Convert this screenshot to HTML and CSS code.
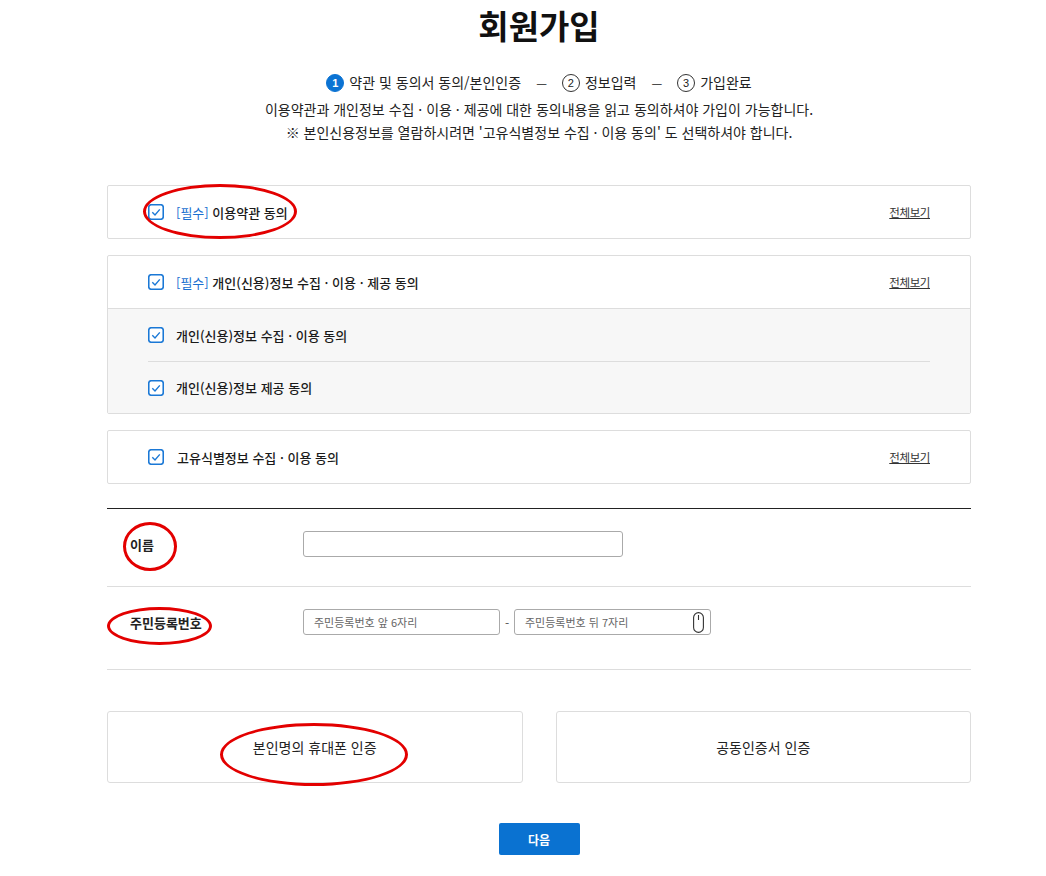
FILE: index.html
```html
<!DOCTYPE html>
<html lang="ko">
<head>
  <meta charset="utf-8">
  <meta name="viewport" content="width=device-width">
  <title>회원가입</title>
  <link rel="stylesheet" href="styles.css">
</head>
<body>

  <div class="wrap">

    <h1 class="title">회원가입</h1>

    <div class="steps">
      <span class="step on"><i>1</i>약관 및 동의서 동의/본인인증</span>
      <span class="dash">—</span>
      <span class="step"><i>2</i>정보입력</span>
      <span class="dash">—</span>
      <span class="step"><i>3</i>가입완료</span>
    </div>
    <p class="desc first">이용약관과 개인정보 수집 · 이용 · 제공에 대한 동의내용을 읽고 동의하셔야 가입이 가능합니다.</p>
    <p class="desc">※ 본인신용정보를 열람하시려면 '고유식별정보 수집 · 이용 동의' 도 선택하셔야 합니다.</p>

    <div class="agree top">
      <div class="agree-row">
        <label class="chk-label">
          <span class="chk"><svg width="16" height="16" viewBox="0 0 16 16"><rect x="0.75" y="0.75" width="14.5" height="14.5" rx="2.5" fill="#fff" stroke="#1a78d6" stroke-width="1.6"/><path d="M4.3 8.3 L7 11 L11.8 5.4" fill="none" stroke="#1a78d6" stroke-width="1.4"/></svg></span>
          <span class="txt"><span class="req">[필수]</span> 이용약관 동의</span>
        </label>
        <a class="more" href="#">전체보기</a>
      </div>
    </div>

    <div class="agree">
      <div class="agree-row">
        <label class="chk-label">
          <span class="chk"><svg width="16" height="16" viewBox="0 0 16 16"><rect x="0.75" y="0.75" width="14.5" height="14.5" rx="2.5" fill="#fff" stroke="#1a78d6" stroke-width="1.6"/><path d="M4.3 8.3 L7 11 L11.8 5.4" fill="none" stroke="#1a78d6" stroke-width="1.4"/></svg></span>
          <span class="txt"><span class="req">[필수]</span> 개인(신용)정보 수집 · 이용 · 제공 동의</span>
        </label>
        <a class="more" href="#">전체보기</a>
      </div>
      <div class="agree-sub">
        <div class="sub-row">
          <label class="chk-label">
            <span class="chk"><svg width="16" height="16" viewBox="0 0 16 16"><rect x="0.75" y="0.75" width="14.5" height="14.5" rx="2.5" fill="#fff" stroke="#1a78d6" stroke-width="1.6"/><path d="M4.3 8.3 L7 11 L11.8 5.4" fill="none" stroke="#1a78d6" stroke-width="1.4"/></svg></span>
            <span class="txt">개인(신용)정보 수집 · 이용 동의</span>
          </label>
        </div>
        <div class="sub-row">
          <label class="chk-label">
            <span class="chk"><svg width="16" height="16" viewBox="0 0 16 16"><rect x="0.75" y="0.75" width="14.5" height="14.5" rx="2.5" fill="#fff" stroke="#1a78d6" stroke-width="1.6"/><path d="M4.3 8.3 L7 11 L11.8 5.4" fill="none" stroke="#1a78d6" stroke-width="1.4"/></svg></span>
            <span class="txt">개인(신용)정보 제공 동의</span>
          </label>
        </div>
      </div>
    </div>

    <div class="agree">
      <div class="agree-row">
        <label class="chk-label">
          <span class="chk"><svg width="16" height="16" viewBox="0 0 16 16"><rect x="0.75" y="0.75" width="14.5" height="14.5" rx="2.5" fill="#fff" stroke="#1a78d6" stroke-width="1.6"/><path d="M4.3 8.3 L7 11 L11.8 5.4" fill="none" stroke="#1a78d6" stroke-width="1.4"/></svg></span>
          <span class="txt pad">고유식별정보 수집 · 이용 동의</span>
        </label>
        <a class="more" href="#">전체보기</a>
      </div>
    </div>

    <div class="form">
      <div class="form-row">
        <div class="form-label">이름</div>
        <input class="inp inp-name" type="text">
      </div>
      <div class="form-row last">
        <div class="form-label">주민등록번호</div>
        <input class="inp inp-rrn" type="text" placeholder="주민등록번호 앞 6자리">
        <span class="hyphen">-</span>
        <div class="inp inp-rrn inp-secure">
          <span class="ph">주민등록번호 뒤 7자리</span>
          <svg width="11" height="21" viewBox="0 0 11 21"><rect x="0.6" y="0.6" width="9.8" height="19.8" rx="4.9" fill="none" stroke="#333" stroke-width="1.1"/><path d="M5.5 3 V8" stroke="#333" stroke-width="1.1"/></svg>
        </div>
      </div>
    </div>

    <div class="auth">
      <button class="auth-btn">본인명의 휴대폰 인증</button>
      <button class="auth-btn">공동인증서 인증</button>
    </div>

    <div class="next">
      <button class="next-btn">다음</button>
    </div>

    <!-- red annotation marks -->
    <span class="mark m1"></span>
    <span class="mark m2"></span>
    <span class="mark m3"></span>
    <span class="mark m4"></span>
  </div>

</body>
</html>
```

FILE: styles.css
```css
html, body {
  margin: 0;
  padding: 0;
  background: #fff;
  color: #222;
  font-family: "Noto Sans CJK KR", "Noto Sans", sans-serif;
}

.wrap {
  position: relative;
  width: 864px;
  margin-left: 107px;
  padding-bottom: 21px;
}

.title {
  margin: 0;
  padding-top: 8px;
  font-size: 33px;
  line-height: 34px;
  font-weight: 700;
  color: #111;
  text-align: center;
}

.steps {
  margin-top: 29px;
  display: flex;
  justify-content: center;
  align-items: center;
  font-size: 14px;
  line-height: 23px;
  color: #222;
}

.step {
  display: flex;
  align-items: center;
}

.step i {
  font-style: normal;
  box-sizing: border-box;
  width: 18px;
  height: 18px;
  border: 1px solid #333;
  border-radius: 50%;
  margin-right: 5px;
  font-size: 11px;
  line-height: 16px;
  text-align: center;
  font-family: "Liberation Sans", Arial, sans-serif;
}

.step.on i {
  background: #0b73d3;
  border-color: #0b73d3;
  color: #fff;
  font-weight: 700;
}

.dash {
  margin: 0 15px;
  font-size: 12px;
}

.desc {
  margin: 0;
  font-size: 14px;
  line-height: 23px;
  text-align: center;
  color: #222;
}

.desc.first {
  margin-top: 4px;
}

.agree {
  border: 1px solid #ddd;
  border-radius: 2px;
  margin-bottom: 16px;
}

.agree.top {
  margin-top: 41px;
}

.agree-row {
  height: 52px;
  display: flex;
  align-items: center;
  justify-content: space-between;
  padding: 0 40px;
}

.chk-label {
  display: flex;
  align-items: center;
  font-size: 13px;
  font-weight: 500;
  color: #1a1a1a;
}

.chk {
  display: flex;
  margin-right: 12px;
}

.req {
  color: #1a6fd0;
  font-weight: 400;
}

.pad {
  padding-left: 1px;
}

.more {
  font-size: 11.5px;
  color: #333;
  letter-spacing: -0.4px;
  text-decoration: underline;
}

.agree-sub {
  background: #f7f7f7;
  border-top: 1px solid #ddd;
  padding: 0 40px;
}

.sub-row {
  height: 52px;
  display: flex;
  align-items: center;
}

.sub-row + .sub-row {
  height: 51px;
  border-top: 1px solid #ddd;
}

.form {
  margin-top: 24px;
  border-top: 1px solid #222;
}

.form-row {
  display: flex;
  align-items: center;
  padding: 22px 0 29px;
  border-bottom: 1px solid #ddd;
}

.form-row.last {
  padding-bottom: 34px;
}

.form-label {
  width: 173px;
  padding-left: 23px;
  font-size: 13px;
  font-weight: 700;
  color: #222;
}

.inp {
  box-sizing: border-box;
  height: 26px;
  border: 1px solid #aaa;
  border-radius: 3px;
  padding: 0 10px;
  margin: 0;
  font-family: inherit;
  font-size: 11px;
  color: #333;
  background: #fff;
}

.inp::placeholder {
  color: #666;
}

.inp-name {
  width: 320px;
}

.inp-rrn {
  width: 197px;
}

.hyphen {
  width: 14px;
  text-align: center;
  font-size: 12px;
  color: #555;
}

.inp-secure {
  display: flex;
  align-items: center;
  justify-content: space-between;
  padding-right: 6px;
}

.ph {
  color: #666;
}

.auth {
  margin-top: 41px;
  display: flex;
  gap: 33px;
}

.auth-btn {
  flex: 1;
  height: 72px;
  border: 1px solid #ddd;
  border-radius: 3px;
  background: #fff;
  font-family: inherit;
  font-size: 14px;
  color: #222;
}

.next {
  margin-top: 40px;
  display: flex;
  justify-content: center;
}

.next-btn {
  width: 81px;
  height: 32px;
  border: none;
  border-radius: 2px;
  background: #0a72d1;
  color: #fff;
  font-family: inherit;
  font-size: 12px;
  font-weight: 700;
}

.mark {
  position: absolute;
  box-sizing: border-box;
  border: 3px solid #e30000;
  border-radius: 50%;
}

.m1 { left: 36px; top: 184px; width: 154px; height: 55px; }
.m2 { left: 16px; top: 522px; width: 54px; height: 49px; }
.m3 { left: 0; top: 607px; width: 105px; height: 38px; }
.m4 { left: 113px; top: 723px; width: 188px; height: 63px; }
```
